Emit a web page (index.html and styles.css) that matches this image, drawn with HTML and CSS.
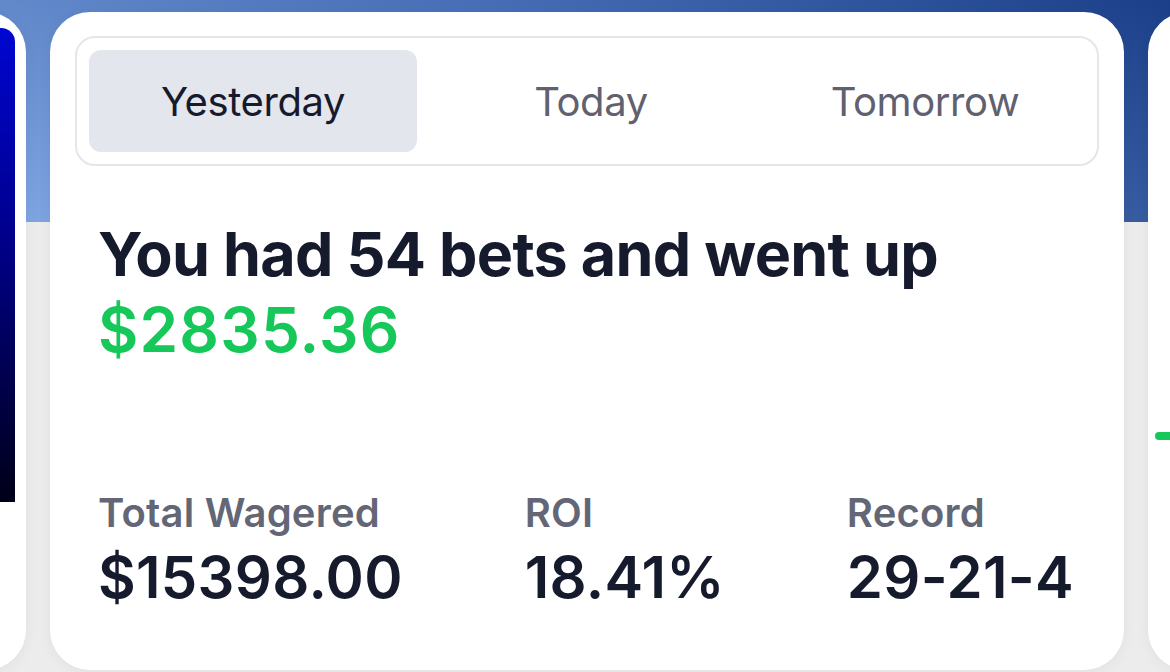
FILE: index.html
```html
<!DOCTYPE html>
<html lang="en">
<head>
<meta charset="utf-8">
<title>Bets summary</title>
<link rel="stylesheet" href="styles.css">
</head>
<body>
<div class="carousel">
  <div class="card card-side card-left">
    <div class="poster"></div>
  </div>
  <div class="card card-main">
    <div class="tabs">
      <div class="tab active">Yesterday</div>
      <div class="tab">Today</div>
      <div class="tab">Tomorrow</div>
    </div>
    <h1 class="headline">You had 54 bets and went up<br><span class="gain">$2835.36</span></h1>
    <div class="stats">
      <div class="stat">
        <div class="stat-label">Total Wagered</div>
        <div class="stat-value">$15398.00</div>
      </div>
      <div class="stat">
        <div class="stat-label">ROI</div>
        <div class="stat-value">18.41%</div>
      </div>
      <div class="stat">
        <div class="stat-label">Record</div>
        <div class="stat-value">29-21-4</div>
      </div>
    </div>
  </div>
  <div class="card card-side card-right">
    <div class="spark"></div>
  </div>
</div>
</body>
</html>
```
FILE: styles.css
```css
* { box-sizing: border-box; }
html, body { height: 100%; }
body {
  margin: 0;
  overflow: hidden;
  font-family: Inter, "Noto Sans", "Liberation Sans", sans-serif;
  background:
    linear-gradient(to bottom, rgba(0, 20, 70, 0.14), rgba(255, 255, 255, 0.1)) 0 0 / 100% 222px no-repeat,
    linear-gradient(to right, #729ce0 0%, #4f7ac6 45%, #1f4794 100%) 0 0 / 100% 222px no-repeat,
    #ececec;
}
.carousel {
  display: flex;
  justify-content: center;
  gap: 24px;
  padding: 12px 0 0 4px;
  height: 670px;
}
.card {
  flex: 0 0 1074px;
  background: #ffffff;
  border-radius: 40px;
  box-shadow: 0 2px 14px rgba(0, 0, 0, 0.05);
}
.card-left {
  padding: 16px 11px 168px 0;
  display: flex;
}
.poster {
  flex: 1;
  border-radius: 0 14px 0 0;
  background: linear-gradient(to bottom, #0006d0 0%, #00008a 45%, #000018 100%);
}
.card-right {
  padding: 420px 0 0 7px;
}
.spark {
  width: 60px;
  height: 8px;
  border-radius: 4px;
  background: #16c75a;
}
.card-main {
  padding: 24px 25px 0 25px;
  display: flex;
  flex-direction: column;
}
.tabs {
  display: flex;
  gap: 6px;
  padding: 12px;
  border: 2px solid #e5e6ea;
  border-radius: 20px;
}
.tab {
  flex: 0 0 calc((100% - 12px) / 3);
  height: 102px;
  display: flex;
  align-items: center;
  justify-content: center;
  font-size: 40px;
  font-weight: 400;
  letter-spacing: -0.4px;
  color: #5f6170;
  border-radius: 12px;
}
.tab + .tab { padding-left: 8px; }
.tab.active {
  background: #e3e6ed;
  color: #171a2c;
}
.headline {
  margin: 51px 0 0 23px;
  font-size: 61px;
  line-height: 75px;
  font-weight: 700;
  letter-spacing: -0.7px;
  color: #151a2d;
}
.gain {
  color: #16c75a;
  font-weight: 600;
  font-size: 62px;
  letter-spacing: 1.2px;
}
.stats {
  margin: 121px 25px 0 23px;
  display: flex;
  justify-content: space-between;
}
.stat-label {
  font-size: 40px;
  line-height: 48px;
  font-weight: 600;
  letter-spacing: 0.2px;
  color: #636675;
}
.stat-value {
  margin-top: 10px;
  font-size: 58px;
  line-height: 60px;
  font-weight: 600;
  letter-spacing: 0.3px;
  color: #151a2d;
}
```
